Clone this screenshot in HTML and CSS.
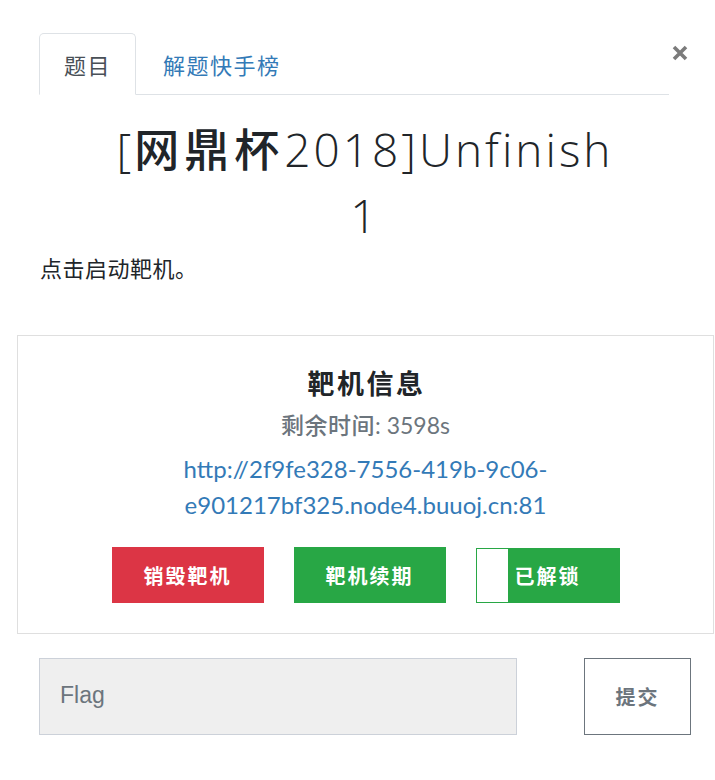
FILE: index.html
```html
<!DOCTYPE html>
<html lang="zh-CN">
<head>
<meta charset="utf-8">
<title>Challenge</title>
<link rel="stylesheet" href="styles.css">
</head>
<body>
<div class="modal">
  <div class="modal-head">
    <ul class="tabs">
      <li class="tab active">题目</li>
      <li class="tab">解题快手榜</li>
    </ul>
    <button class="close" aria-label="Close">
      <svg width="16" height="16" viewBox="0 0 16 16"><path d="M2 2 L14 14 M14 2 L2 14" stroke="#7b7b7b" stroke-width="3.6" stroke-linecap="butt"/></svg>
    </button>
  </div>
  <h2 class="title">[<span class="cjk">网鼎杯</span>2018]Unfinish 1</h2>
  <p class="desc">点击启动靶机。</p>
  <div class="card">
    <h4 class="card-title">靶机信息</h4>
    <p class="remain"><span class="remain-label">剩余时间</span>: 3598s</p>
    <a class="link" href="#">http://2f9fe328-7556-419b-9c06-<br>e901217bf325.node4.buuoj.cn:81</a>
    <div class="actions">
      <button class="btn btn-red">销毁靶机</button>
      <button class="btn btn-green">靶机续期</button>
      <button class="btn btn-unlock"><span class="knob"></span>已解锁</button>
    </div>
  </div>
  <div class="submit-row">
    <div class="flag-input">Flag</div>
    <button class="submit">提交</button>
  </div>
</div>
</body>
</html>
```
FILE: styles.css
```css
* { box-sizing: border-box; }
html, body { margin: 0; padding: 0; background: #fff; }
body {
  font-family: "Lato", "Noto Sans CJK SC", sans-serif;
  color: #212529;
  font-size: 21px;
}
.modal { padding-top: 33px; width: 715px; }
.modal-head { display: flex; align-items: flex-start; padding-left: 39px; }
.tabs {
  list-style: none; margin: 0; padding: 0;
  display: flex; width: 630px; height: 62px;
  border-bottom: 1px solid #dee2e6;
}
.tab {
  height: 62px; padding: 0 24px 0 25px; margin-right: 1px;
  display: flex; align-items: center;
  font-family: "Noto Sans CJK SC", sans-serif;
  font-size: 22px; letter-spacing: 1.5px;
  color: #337ab7;
  border: 1px solid transparent;
  border-radius: 5px 5px 0 0;
}
.tab.active {
  color: #495057; background: #fff;
  border-color: #dee2e6 #dee2e6 #fff;
  padding: 0 24px;
}
.close {
  margin: 12px 0 0 3px; padding: 0; border: 0; background: none;
  width: 16px; height: 16px; display: block;
}
.close svg { display: block; }
.title {
  margin: 20px 0 0 103px; width: 524px;
  text-align: center;
  font-family: "Open Sans", "Noto Sans CJK SC", sans-serif;
  font-weight: 300; font-size: 46px; line-height: 66px;
  letter-spacing: 3px;
  color: #212529;
}
.title .cjk {
  font-family: "Noto Sans CJK SC", sans-serif;
  font-weight: 500; font-size: 45px; letter-spacing: 5px;
}
.desc {
  margin: 3px 0 0 40px;
  font-family: "Noto Sans CJK SC", sans-serif;
  font-size: 22px; line-height: 32px; letter-spacing: 0.5px;
}
.card {
  margin: 52px 0 0 17px; width: 697px;
  border: 1px solid #dfdfdf;
  padding: 31px 0 30px;
  display: flex; flex-direction: column; align-items: center;
  text-align: center;
}
.card-title {
  margin: 0; font-family: "Noto Sans CJK SC", sans-serif;
  font-weight: 700; font-size: 27px; line-height: 31px; color: #212529;
  letter-spacing: 2.5px; padding-left: 2px;
}
.remain {
  margin: 10px 0 0; color: #6c757d;
  font-size: 23px; line-height: 32px;
}
.remain-label { font-family: "Noto Sans CJK SC", sans-serif; font-weight: 500; letter-spacing: 0.5px; }
.link {
  margin-top: 10px; color: #337ab7; text-decoration: none;
  font-size: 24px; line-height: 36px;
}
.actions { display: flex; gap: 30px; margin-top: 24px; align-items: center; }
.btn {
  height: 56px; border: 0; padding: 0; color: #fff;
  font-family: "Noto Sans CJK SC", sans-serif;
  font-weight: 700; font-size: 20px; letter-spacing: 2px;
}
.btn-red { width: 152px; background: #dc3545; }
.btn-green { width: 152px; background: #28a745; }
.btn-unlock {
  position: relative; width: 144px; height: 55px;
  background: #28a745; border: 1px solid #28a745;
  margin-top: 1px;
}
.knob {
  position: absolute; left: 0; top: 0; bottom: 0; width: 31px; background: #fff;
}
.submit-row { display: flex; margin: 24px 0 0 39px; align-items: flex-start; }
.flag-input {
  width: 478px; height: 77px; background: #efefef;
  border: 1px solid #ccd1d9;
  padding-left: 20px;
  display: flex; align-items: center;
  font-family: "Liberation Sans", sans-serif; font-size: 23px; color: #6c757d;
  padding-bottom: 3px;
}
.submit {
  margin-left: 67px; width: 107px; height: 77px;
  background: #fff; border: 1px solid #6c757d; padding: 0;
  font-family: "Noto Sans CJK SC", sans-serif;
  font-weight: 700; font-size: 20px; color: #6c757d; letter-spacing: 2px;
}
```
